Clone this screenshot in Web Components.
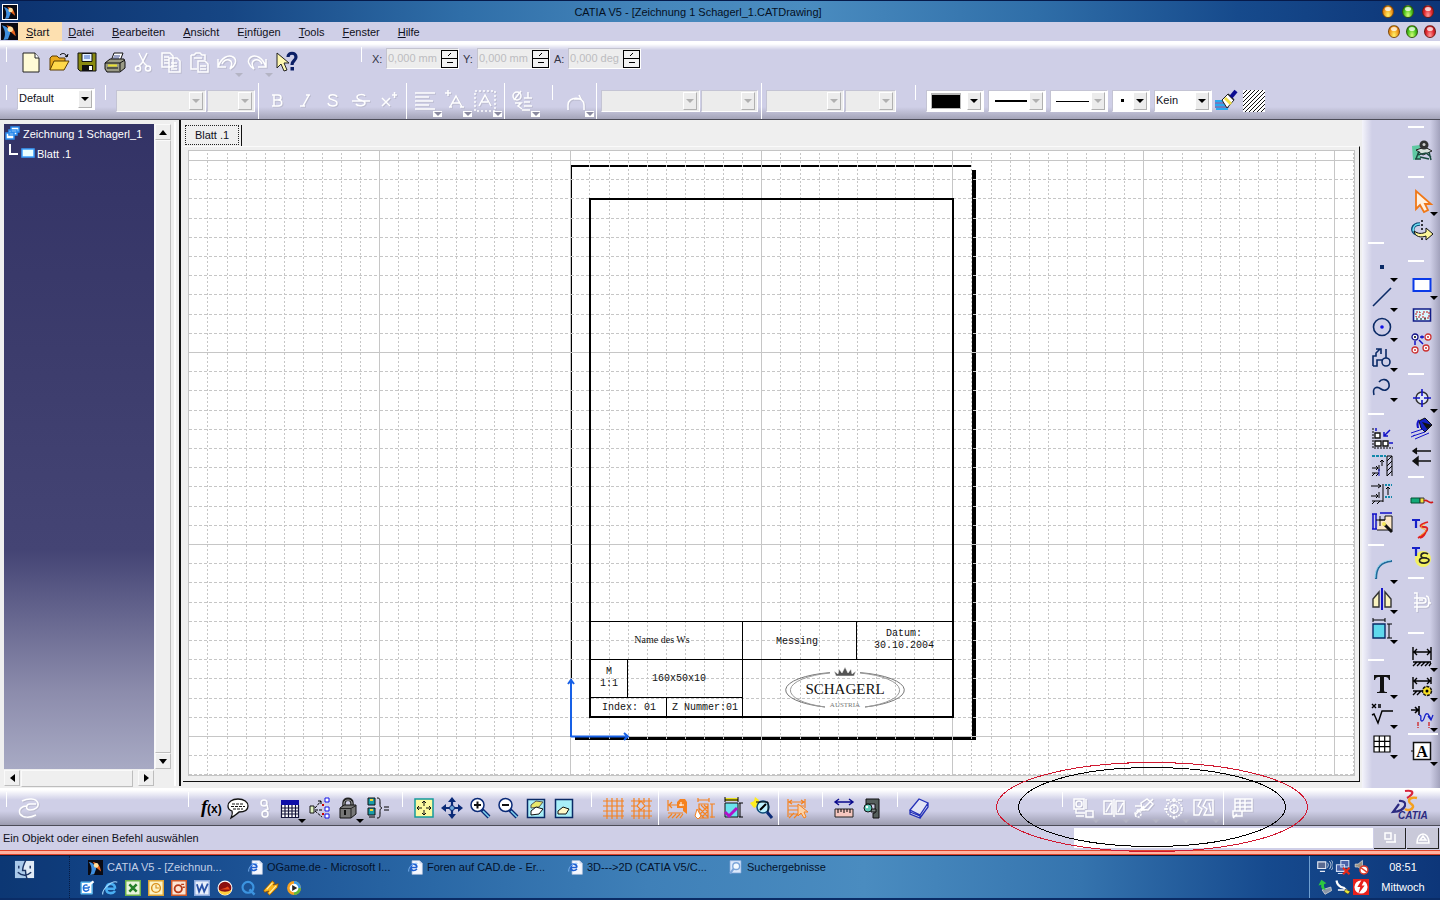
<!DOCTYPE html>
<html lang="de">
<head>
<meta charset="utf-8">
<title>CATIA V5 - [Zeichnung 1 Schagerl_1.CATDrawing]</title>
<style>
  html, body { margin: 0; height: 100%; }
  body { font: 11px/14px "Liberation Sans", Arial, sans-serif; color: #101020; background: #cfcfe7; overflow: hidden; }
</style>
</head>
<body>
<cad-app></cad-app>
<script>
/* ---------- icon drawings, 22 x 22 grid ---------- */
const K = 'stroke="#000" fill="none"';
const N = 'stroke="#0a2a66" fill="none" stroke-width="1.6"';
const B = 'stroke="#1212c8" fill="none"';
const W = 'stroke="#fff" fill="none" stroke-width="1.5"';
const O = 'stroke="#f58220" fill="none" stroke-width="1.2"';
const ICONS = {
  new: `<path d="M3 2h12l4 5v14H3z" fill="#fffbd6" stroke="#222"/><path d="M15 2v5h4" fill="#fff" stroke="#222"/>`,
  open: `<path d="M2 19V7l2-2h5l2 2h6v3" fill="#e9a91c" stroke="#5c3c00"/><path d="M2 19l4-9h15l-5 9z" fill="#ffd84a" stroke="#5c3c00"/><path d="M12 4c3-3 6-1 7 2m0 0l-2-1m2 1l1-3" ${K}/>`,
  save: `<path d="M2 2h18v18H4l-2-2z" fill="#8a8a10" stroke="#111"/><path d="M6 2.500h10v8H6z" fill="#e6f3ff" stroke="#111"/><path d="M8 5h6M8 7h6" stroke="#3a62c0"/><path d="M6 14h11v6H6z" fill="#111"/><path d="M13 15h3v4h-3z" fill="#fff"/>`,
  print: `<path d="M7 10l3-8h9l-3 8z" fill="#fff" stroke="#111"/><path d="M10 5h6M9 7h6" stroke="#3a4a90"/><path d="M1 12l5-4h14l1 3v6l-5 4H3l-2-3z" fill="#9a9a86" stroke="#111"/><path d="M1 12h15l5-3M16 12v8M3 17h11" stroke="#111" fill="none"/><path d="M4 14.500h9" stroke="#e8e030" stroke-width="2"/>`,
  cut: `<path d="M7 2l5 10M15 2l-5 10M10 12l-3 3M12 12l3 3" ${W}/><circle cx="6" cy="17.500" r="2.500" ${W}/><circle cx="16" cy="17.500" r="2.500" ${W}/>`,
  copy: `<path d="M2 2h8l3 3v11H2zM4 6h5M4 9h5M4 12h5M9 7h8l3 3v11H9zM11 12h6M11 15h6M11 18h6" ${W}/>`,
  paste: `<path d="M3 4h3l2-2h4l2 2h3v5M3 4v14h6M6 7h8M10 10h7l3 3v8H10zM12 15h6M12 18h6" ${W}/>`,
  undo: `<path d="M2 8v8h8M2 16c3-9 10-13 15-10s2 9-3 12c3-5 2-8-1-9s-6 1-7 4" ${W}/>`,
  redo: `<path d="M20 8v8h-8M20 16c-3-9-10-13-15-10s-2 9 3 12c-3-5-2-8 1-9s6 1 7 4" ${W}/>`,
  help: `<path d="M1 2v15l4-4 3 7 3-1-3-7h5z" fill="#fff8b0" stroke="#222"/><path d="M12 6c0-5 8-5 8 0 0 4-4 3-4 8" fill="none" stroke="#0b1f66" stroke-width="3.200"/><path d="M14.500 16h3.500v3.500h-3.500z" fill="#0b1f66"/>`,
  bold: `<path d="M6 5h6c4 0 4 5 0 5H8h4c5 0 5 6 0 6H6M8 5v11" ${W}/>`,
  italic: `<path d="M15 5l-6 11M12 5h4M6 16h5" ${W}/>`,
  under: `<path d="M15 7c-1-3-8-3-8 0 0 4 8 2 8 6 0 4-8 4-9 0" ${W}/>`,
  strike: `<path d="M15 6c-1-2-8-2-8 1 0 4 8 3 8 6s-7 4-9 1M2 11h18" ${W}/>`,
  super: `<path d="M4 8l8 8M12 8l-8 8M14 5h5M16.500 2v6" ${W}/>`,
  align: `<path d="M1 3h20M1 7h14M1 11h18M1 15h14M1 19h20" ${W}/>`,
  anchor: `<path d="M1 3h6M4 0v6M6 17L12 6l6 11M8 13h8M5 17h3M16 17h4" ${W}/>`,
  frame: `<path d="M1 1h20v20H1z" ${W} stroke-dasharray="2 2"/><path d="M5 16l6-11 6 11M8 12h6" ${W}/>`,
  symbol: `<circle cx="5" cy="6" r="4" ${W}/><path d="M2 10L9 1M12 8h8M16 2v6M3 13h6l-3 3 4 3M12 12h6M12 16h8M10 20h8" ${W}/>`,
  curve: `<path d="M2 20v-5c0-9 16-9 16 0v5M8 9h7l-2-4" ${W}/>`,
  brush: `<path d="M0 11h12M0 15h12M1 19h12" stroke="#29a8ef" stroke-width="2"/><path d="M0 13h12M0 17h14" stroke="#0a2a99"/><path d="M7 10l6-6 6 6-7 8z" fill="#fff" stroke="#222"/><path d="M10 8l6 6" stroke="#f2e04a" stroke-width="3"/><path d="M13 4l6 6" stroke="#222" stroke-width="1.500"/><path d="M16 7l5-6" stroke="#0b0b90" stroke-width="4"/>`,
  hatch: `<path d="M0 0h22v22H0z" fill="#fff"/><path d="M0 4L4 0M0 8L8 0M0 12L12 0M0 16L16 0M0 20L20 0M2 22L22 2M6 22L22 6M10 22L22 10M14 22l8-8M18 22l4-4" stroke="#111"/>`,
  refresh: `<path d="M5 4c6-3 14-3 16 2 1 4-3 7-8 7s-4-6 0-6h6M19 18c-6 3-13 3-16-1-2-5 2-8 7-8" ${W}/>`,
  fx: `<text x="2" y="16" font-family="Liberation Serif" font-style="italic" font-weight="700" font-size="19">f</text><text x="8" y="16" font-family="Liberation Sans" font-size="12" font-weight="700">(x)</text>`,
  bubble: `<path d="M11 2c6 0 10 3 10 7s-4 6-9 6c-2 2-5 4-8 6 1-3 2-4 1-7-3-1-4-3-4-5 0-4 4-7 10-7z" fill="#fff" stroke="#111" stroke-width="1.300"/><path d="M5 7h12M4 9.500h14M6 12h10" stroke="#111" stroke-dasharray="3 1"/>`,
  chain: `<circle cx="11" cy="6" r="3" ${W}/><circle cx="12" cy="17" r="3" ${W}/><path d="M14 8l1 4-4 2" ${W}/>`,
  table: `<path d="M2 3h18v18H2z" fill="#fff"/><path d="M2 3h18v5H2z" fill="#1010a8"/><path d="M2.500 8v12.500h17V8M6 8v12M9.500 8v12M13 8v12M16.500 8v12M2 11h18M2 14h18M2 17h18" stroke="#15153a" fill="none" stroke-width="1.200"/>`,
  nodes: `<path d="M1 9h4v7H1z" fill="#dff3c0" stroke="#111"/><path d="M6 11L12 4M12 4h-3M12 4v3M6 13h8M6 14l7 6" ${K} stroke-dasharray="3 1"/><path d="M16 1h4v4h-4zM16 10h4v4h-4zM16 17h4v4h-4z" fill="#fff" stroke="#1212e8"/><path d="M13 7l2 2m0-2l-2 2m0 7l2 2m0-2l-2 2" stroke="#c00"/>`,
  lock: `<path d="M7 10V6c0-5 8-5 8 0v4" fill="none" stroke="#222" stroke-width="3.500"/><path d="M7 10V6c0-4 8-4 8 0v4" fill="none" stroke="#aaa"/><path d="M3 11l4-3h12v9l-5 4H3z" fill="#777" stroke="#111"/><path d="M14 12v9M3 11.500h11l5-3" stroke="#222" fill="none"/><path d="M8 13v5" stroke="#111" stroke-width="2"/>`,
  brace: `<path d="M1 1h7v7H1zM1 11h7v7H1z" fill="#1b9ba8" stroke="#111"/><path d="M3 2h3v2H3zM3 12h3v2H3z" fill="#f2d835"/><path d="M10 1c3 0 3 1 3 5s0 4 2 5c-2 1-2 1-2 5s0 5-3 5M17 10h5M17 13h5M2 20h6" ${K} />`,
  fit: `<path d="M2 2h18v18H2z" fill="#fdfba0" stroke="#159a9a" stroke-width="1.500"/><path d="M11 4v5M11 13v5M4 11h5M13 11h5M9 6l2-2 2 2M9 16l2 2 2-2M6 9l-2 2 2 2M16 9l2 2-2 2" stroke="#111" fill="none"/>`,
  pan: `<path d="M11 3v16M3 11h16" stroke="#0a2a77" stroke-width="2.200"/><path d="M11 0l4 5H7zM11 22l4-5H7zM0 11l5-4v8zM22 11l-5-4v8z" fill="#0a2a77"/><circle cx="11" cy="11" r="2.500" fill="#6fa8d8" stroke="#0a2a77"/>`,
  zoomin: `<path d="M13 13l7 7" stroke="#0a2a77" stroke-width="4"/><path d="M14 14l6 6" stroke="#7fd4ef" stroke-width="1.500"/><circle cx="8.500" cy="8" r="6.500" fill="#fff" stroke="#0a2a77" stroke-width="1.500"/><path d="M5 8h7M8.500 4.500v7" stroke="#111" stroke-width="2"/>`,
  zoomout: `<path d="M13 13l7 7" stroke="#0a2a77" stroke-width="4"/><path d="M14 14l6 6" stroke="#7fd4ef" stroke-width="1.500"/><circle cx="8.500" cy="8" r="6.500" fill="#fff" stroke="#0a2a77" stroke-width="1.500"/><path d="M5 8h7" stroke="#111" stroke-width="2"/>`,
  viewa: `<path d="M2.500 2.500h17v18h-17z" fill="#a8eef8" stroke="#0a2a66" stroke-width="1.500"/><path d="M6 8l5-4 7 1-4 5-8 1z" fill="#e9e86a" stroke="#555"/><path d="M6 14l5-4 7 2-4 5-8 1z" fill="#fff" stroke="#111"/>`,
  viewb: `<path d="M2.500 2.500h17v18h-17z" fill="#a8eef8" stroke="#0a2a66" stroke-width="1.500"/><path d="M5 14l5-4 6 2-3 5-8 0z" fill="#fff9c8" stroke="#111"/>`,
  grid: `<path d="M5 1v21M10 1v21M15 1v21M20 1v21M1 4h21M1 9h21M1 14h21M1 19h21" ${O}/>`,
  snap: `<path d="M4 1v21M9 1v5M9 12v10M14 12v10M14 1v5M19 1v21M1 4h21M1 9h6M15 9h6M1 14h21M1 19h21M11 4l4 5-4 4-4-4z" ${O}/>`,
  dimA: `<path d="M2 3v11M3 8h8M6 5L3 8l3 3M2 16h15M2 21l4-4M6 21l4-4M10 21l4-4M14 21l3-4" ${O}/><path d="M11 11V5l3-3h5l2 3v12l-4-3v-3z" fill="#f58220"/><path d="M13 8h5M15 5v4" stroke="#fff"/>`,
  dimB: `<path d="M4 3h11M4 1v4M15 1v4M5 7h9v14H5zM18 7v14M16 7h5M16 20h5M5 11l9 9M5 16l5 5M7 8l7 7M10 8l4 4M14 9l-8 8M14 14l-6 6" ${O}/><path d="M3 12l4 7-3 3-3-3z" fill="#fff" stroke="#f58220"/>`,
  check: `<path d="M3 6h13v14H3z" fill="#6be3ee" stroke="#111"/><path d="M3 2.500h13" stroke="#e8e020" stroke-width="3"/><path d="M3 0v5M16 0v5M18 6v14M17 6h4M17 20h4M3 3h13" ${K}/><path d="M3 15l4 4 8-8" stroke="#b013c8" fill="none" stroke-width="3"/>`,
  spark: `<path d="M0 6l4-2 1-4 4 3-1 6-4 2z" fill="#ffee20"/><circle cx="13" cy="10" r="6" fill="#bdf2ff" stroke="#0a4a77" stroke-width="1.500"/><path d="M6 5h12v12" ${K}/><path d="M17 15l5 6" stroke="#0a2a77" stroke-width="3"/><path d="M10 13l6-6" ${K} stroke-width="2"/>`,
  dimC: `<path d="M2 2v18M19 2v9M3 5h15M3 9h15M6 3L3 5l3 2M15 3l3 2-3 2M2 13h12M3 17h12M3 21l5-5M8 21l5-5" ${O} stroke-width="1.600"/><path d="M12 7v12l3-3 3 5 2-1-2-5h4z" fill="#fbd3aa" stroke="#f58220"/>`,
  measure: `<path d="M2 5h18M6 2L2 5l4 3M16 2l4 3-4 3" stroke="#0a0a8c" fill="none" stroke-width="1.400"/><path d="M2 12h18v8H2z" fill="#f6c7c0" stroke="#222"/><path d="M5 12v4M8 12v3M11 12v4M14 12v3M17 12v4" ${K}/>`,
  caliper: `<path d="M5 2h13v19h-6v-5h2V7H5z" fill="#555f5c" stroke="#111"/><path d="M10 12h5v3h-5z" fill="#7b8583" stroke="#111"/><circle cx="7" cy="11" r="4" fill="#5fc9b8" stroke="#111"/><circle cx="6" cy="10" r="1.200" fill="#fff"/>`,
  slab: `<path d="M2 13L11 2l9 4-8 12zM2 13v4l10 4v-4M12 21l8-11V6M2 15l10 4" fill="#eef2ff" stroke="#2330b8" stroke-width="1.300" fill-opacity=".6"/>`,
  v1: `<path d="M1 2h10v10H1zM13 14h7v6h-7zM3 12v4h9M13 2v10M3 19h8" ${W}/><circle cx="6" cy="7" r="3" ${W}/>`,
  v2: `<path d="M1 4h8v13H1zM13 4h8v13h-8zM11 2v18M3 15l5-9M15 15l5-9" ${W}/>`,
  v3: `<path d="M8 6l6-4 6 5-5 6-6-1zM2 9h6M4 13h8M2 18l9-9M20 2L8 14" ${W}/><circle cx="5" cy="17" r="3" ${W} stroke-dasharray="2 1"/>`,
  v4: `<circle cx="11" cy="12" r="8" ${W} stroke-dasharray="2 1"/><circle cx="11" cy="12" r="4" ${W}/><path d="M11 1v21M1 12h8M3 3h16" ${W} stroke-dasharray="4 2"/>`,
  v5: `<path d="M1 3h7l-3 6 4 3-3 6H1zM13 3l-3 6 4 3-3 6h9V3zM16 6l2 9" ${W}/>`,
  v6: `<path d="M4 2h17v12H4zM4 6h17M4 10h17M9 2v12M14 2v12M2 14h9v5H2zM2 21l4-4" ${W}/>`,
  wb: `<path d="M1 6l8-1v14l-7 1z" fill="#5fc9a2"/><path d="M5 10l9-3 7 4-9 4z" fill="#d8e2dc" stroke="#222"/><path d="M6 15l9-2 5 4M8 11l-3 8M18 12l2 8M4 19h6M9 17l9 2" stroke="#1b4b3e" fill="none" stroke-width="1.500"/><circle cx="13" cy="5" r="4.500" fill="#333"/><circle cx="13" cy="4.500" r="1.500" fill="#ccc"/>`,
  arrow: `<path d="M5 1v18l4-4 4 7 4-2-3-6h6z" fill="#fff1e0" stroke="#f07818" stroke-width="1.800"/>`,
  rotate: `<path d="M9 4C1 4-1 12 6 14" fill="none" stroke="#0a4a77" stroke-width="3.500"/><path d="M9 4C2 4 0 11 5 13" fill="none" stroke="#6fe0f2" stroke-width="1.500"/><path d="M3 11c4 3 8 3 12 1V8l7 6-7 6v-4c-5 2-11 1-12-5z" fill="#fbf59a" stroke="#111"/><path d="M11 0v10M11 18v4" ${K} stroke-dasharray="2 2" stroke-width="1.500"/>`,
  sheet: `<path d="M2.500 5h17v12h-17z" fill="#fff" stroke="#0a3ae8" stroke-width="2"/>`,
  view: `<path d="M2.500 5h17v12h-17z" fill="#d8f8ff" stroke="#111c88" stroke-width="1.600"/><path d="M5 8h4v5H5zM12 8h6v6h-6z" fill="none" stroke="#c01818" stroke-dasharray="2 1"/><path d="M5 15h12" stroke="#111" stroke-dasharray="2 2"/>`,
  circles: `<g fill="#fff" stroke-width="1.300"><circle cx="4" cy="5" r="3" stroke="#111188"/><circle cx="17" cy="5" r="3" stroke="#c33"/><circle cx="4" cy="18" r="3" stroke="#c33"/><circle cx="15" cy="16" r="3" stroke="#c33"/></g><circle cx="4" cy="5" r="1"/><g fill="#c33"><circle cx="17" cy="5" r="1"/><circle cx="4" cy="18" r="1"/><circle cx="15" cy="16" r="1"/></g><path d="M9 5h4m-2-1.500V6.500M4 9v4M8 8l4 4" ${B} stroke-width="1.500"/>`,
  target: `<circle cx="11" cy="11" r="6" fill="#dfe6f6" stroke="#333" stroke-width="1.500"/><path d="M11 2v7M11 13v7M2 11h7M13 11h7" ${B} stroke-width="1.600"/>`,
  bucket: `<path d="M8 4l6-3 7 7-7 7-4-4z" fill="#1420c0" stroke="#111"/><path d="M11 5l5 7 5-4" fill="#111"/><path d="M8 3c-3 4-1 6-1 8" ${B} stroke-width="2"/><path d="M0 16l12-4M2 19l12-4M4 22l14-6M0 20l4-2" ${B}/>`,
  arrows: `<path d="M20 6H3M6 3L2 6l4 3M20 16H3M7 12l-5 4 5 4z" stroke="#111" fill="#111" stroke-width="1.400"/>`,
  weld: `<path d="M0 8h9v5H0z" fill="#12a878" stroke="#053"/><path d="M9 8h4v5H9z" fill="#f2e23c" stroke="#333"/><path d="M13 11c3-3 5 4 9 1" stroke="#d01818" fill="none" stroke-width="1.600"/>`,
  tz: `<path d="M1 2h8M5 2v8" stroke="#1520c8" stroke-width="2.200"/><path d="M17 4c-8 2-10 5-4 5s4 5-6 11M15 12c0 4-3 7-6 8" stroke="#e02020" fill="none" stroke-width="1.800"/><path d="M14 6c-6 3-5 4-1 5s0 4-4 7" stroke="#ffb028" fill="none"/>`,
  ts: `<circle cx="12" cy="13" r="8" fill="#f2f060"/><path d="M1 2h8M5 2v8" stroke="#1520c8" stroke-width="2.200"/><path d="M17 8c-3-2-7-1-7 2s8 1 8 4-6 4-9 2c-2-3 2-5 7-4" stroke="#222" fill="none" stroke-width="1.600"/>`,
  balloon: `<path d="M3 2h3v19M3 7h9c4 0 4 5 0 5H3M3 16h12c4 0 4-11 0-11M17 12h3M8 9h4" ${W}/>`,
  dim: `<path d="M2 1v13M20 1v13M3 6h16M6 3L3 6l3 3M16 3l3 3-3 3M2 16h18M2 20l4-4M6 20l4-4M10 20l4-4M14 20l4-4M18 20l2-3" ${K} stroke-width="1.400"/>`,
  dimgear: `<path d="M2 1v12M20 1v7M3 5h16M6 2L3 5l3 3M16 2l3 3-3 3M2 15h10M2 19l4-4M6 19l4-4" ${K} stroke-width="1.400"/><circle cx="16" cy="15" r="4.500" fill="#f7df25" stroke="#111" stroke-width="1.500" stroke-dasharray="3 1"/><circle cx="16" cy="15" r="1.500"/>`,
  break: `<path d="M0 4h7M4 1l3 3-3 3M8 0v9" ${K} stroke-width="1.600"/><path d="M8 9c4 0 0 6 3 6s2-9 6-7l3 5M17 10l3 4 2-5" stroke="#1520c8" fill="none" stroke-width="1.300"/><path d="M7 16v6M18 16v6" stroke="#d02020" stroke-width="1.300" stroke-dasharray="4 1"/>`,
  datum: `<path d="M2.500 2.500h17v17h-17z" fill="#fff" stroke="#111" stroke-width="1.500"/><text x="11" y="17" text-anchor="middle" font-family="Liberation Serif" font-weight="700" font-size="16">A</text><path d="M0 11h2" ${K}/>`,
  point: `<path d="M9 9h4v4H9z" fill="#0a2a66"/>`,
  line: `<path d="M2 20L20 2" ${N}/>`,
  circle: `<circle cx="11" cy="11" r="8.500" ${N}/><circle cx="11" cy="11" r="1.800" fill="#1212e8"/>`,
  profile: `<path d="M2 20V10h3V7l4-4M5 3h5v5M2 20h4v-6h6M15 3v9" ${N}/><circle cx="15" cy="16" r="4" ${N}/>`,
  spline: `<path d="M3 19c-2-8 3-9 7-6s9 0 8-5-7-6-10-2" ${N}/>`,
  cons1: `<path d="M2 1v20h20" ${K} stroke-dasharray="2 1"/><path d="M4 6h5v5H4zM4 14h6v5H4zM12 14h5v5h-5z" fill="#fff" stroke="#111" stroke-width="1.400"/><path d="M19 3l-6 6m0-4v4h4M22 16h-4M5 1v3" ${B} stroke-width="1.500"/>`,
  cons2: `<path d="M1 1h14" stroke="#18a" stroke-width="2" stroke-dasharray="3 1"/><path d="M16 1h5v20M16 1v20M16 6l5-5M16 11l5-5M16 16l5-5M16 21l5-5M1 13h6M5 11l2 2-2 2M8 10v6M1 18h7M1 21l3-3M5 21l3-3M11 5v6M9 7l2-2 2 2" ${K}/><path d="M8 14v7" ${B}/>`,
  cons3: `<path d="M0 3h10M7 1l3 2-3 2M0 13h7M5 11l2 2-2 2M12 1v18M8 9v6M1 18h11M1 21l3-3M6 21l3-3M17 4v8M15 6l2-2 2 2" ${K}/><path d="M14 2h7M14 14h7" stroke="#18a" stroke-dasharray="2 1" stroke-width="2"/>`,
  cons4: `<path d="M8 9h6V5h7v14H6" fill="#fde8c8" stroke="#111"/><path d="M2 3v15M5 3v15M1 3h5M1 18h5M9 2h12" ${B} stroke-width="1.500"/><path d="M5 9h9M9 5v10" stroke="#111"/><path d="M13 13l8 8" stroke="#111" stroke-width="3"/><circle cx="13" cy="13" r="2" fill="#f5e85a"/>`,
  fillet: `<path d="M5 21C5 9 10 4 21 3" fill="none" stroke="#1f6a9a" stroke-width="2.200"/><path d="M4 20C4 9 10 3 20 2" fill="none" stroke="#9ad8f0"/>`,
  mirror: `<path d="M2 19V11l6-7v15zM20 19V11l-6-7v15z" fill="#faf3c0" stroke="#333" stroke-width="1.400"/><path d="M11 0v22" ${B} stroke-width="2"/>`,
  box: `<path d="M2 6h12v14H2z" fill="#5fd8ec" stroke="#0a2a66" stroke-width="1.400"/><path d="M2 2h12M2 0v4M14 0v4M18 6v14M16 6h5M16 20h5" ${K}/>`,
  text: `<path d="M3 2h16v5h-1c-1-3-2-3-5-3v13c0 2 1 2 3 2v1H6v-1c2 0 3 0 3-2V4C6 4 5 4 4 7H3z" fill="#111"/>`,
  rough: `<path d="M1 1l4 4m0-4L1 5M7 2h3M7 4h3M1 12l2-1 4 9 4-12h11" ${K} stroke-width="1.400"/>`,
  gridt: `<path d="M3 3h16v16H3z" fill="#fff"/><path d="M3 3h16v16H3zM8.300 3v16M13.700 3v16M3 8.300h16M3 13.700h16" ${K} stroke-width="1.200"/>`,
  catia: `<path d="M0 0h22v22H0z" fill="#0a0a12"/><path d="M1 3c6 1 10 5 11 10l-3 8-6 1c4-7 2-14-2-19z" fill="#3f8fe0"/><path d="M7 3c7 1 11 5 12 14l-7-6z" fill="#e8641c"/><circle cx="12" cy="8" r="3.500" fill="#ffe0a0"/>`,
  page: `<path d="M6 1h11l4 4v16H6z" fill="#f6f8ff" stroke="#bcc8e0"/><path d="M17 1v4h4" fill="#cdd8ee"/><path d="M13 11H4c0 6 7 5 9 2M4 10c1-6 9-5 9 1" fill="none" stroke="#1e5ed0" stroke-width="2.500"/><path d="M1 17C0 10 9 3 14 5" fill="none" stroke="#7db4f4" stroke-width="1.300"/>`,
  search: `<path d="M3 1h16v18H3z" fill="#dbe8fb" stroke="#8fb0de"/><circle cx="12" cy="9" r="5" fill="#f4faff" stroke="#7da6da" stroke-width="2"/><path d="M8 13l-5 7" stroke="#7da6da" stroke-width="3"/>`,
  mail: `<path d="M3 3h15v16H3z" fill="#fff" stroke="#5fb8ec" stroke-width="2" stroke-linejoin="round"/><path d="M14 11H6c0 6 6 5 8 2M6 10c1-5 8-4 8 1" fill="none" stroke="#1e6ed8" stroke-width="2"/><path d="M12 8l8-6" stroke="#fff" stroke-width="3"/>`,
  ie: `<path d="M18 12H6c0 8 9 7 12 3M6 11c1-8 12-7 12 1" fill="none" stroke="#4aaef2" stroke-width="3.500"/><path d="M1 20C0 12 14 0 21 3" fill="none" stroke="#a8dcff" stroke-width="1.500"/>`,
  excel: `<path d="M1 1h20v20H1z" fill="#e8f4dc" stroke="#6db04a" stroke-width="2"/><path d="M6 6l10 10M16 6L6 16" stroke="#25802a" stroke-width="3.500"/>`,
  clock: `<path d="M1 1h20v20H1z" fill="#fdf2c4" stroke="#dba336" stroke-width="2"/><circle cx="11" cy="11" r="6" fill="none" stroke="#d98f1c" stroke-width="2"/><path d="M11 7v4h4" stroke="#d98f1c" fill="none" stroke-width="1.500"/>`,
  ppt: `<path d="M1 1h20v20H1z" fill="#fce4d4" stroke="#d05a2a" stroke-width="2"/><circle cx="10" cy="12" r="5" fill="none" stroke="#b83a18" stroke-width="2.500"/><path d="M14 6h4M16 10h3" stroke="#b83a18" stroke-width="2"/>`,
  word: `<path d="M1 1h20v20H1z" fill="#e8effc" stroke="#8ba8dc" stroke-width="2"/><path d="M4 6l3 10 4-9 3 9 5-11" fill="none" stroke="#2a52a8" stroke-width="2.500"/>`,
  ff: `<circle cx="11" cy="11" r="9.500" fill="#8c1010" stroke="#fff" stroke-width="1.500"/><path d="M2 13c5 4 13 4 18 0-2 10-16 10-18 0z" fill="#ffd040"/><path d="M4 13h14l-3-4-4 2z" fill="#e84818"/>`,
  qt: `<circle cx="11" cy="10" r="7.500" fill="none" stroke="#3c94e0" stroke-width="3"/><path d="M13 13l7 7" stroke="#3c94e0" stroke-width="3.500"/>`,
  bolt: `<path d="M1 14L13 1l3 3-2 3 7-2-1 5L9 21l-3-3 2-3-6 2z" fill="#fbb51c" stroke="#8a4a00"/><path d="M5 13L13 4M9 18L18 8" stroke="#fff2b0" stroke-width="1.500"/>`,
  wmp: `<circle cx="11" cy="11" r="9.500" fill="#f5a020"/><path d="M11 1.500A9.500 9.500 0 0 1 20.500 11H11z" fill="#3b9be8"/><path d="M20.500 11A9.500 9.500 0 0 1 11 20.500V11z" fill="#62b838"/><circle cx="11" cy="11" r="6" fill="#fff"/><path d="M8.500 7l7 4-7 4z" fill="#222"/>`,
  finder: `<path d="M1 2h20v18H1z" fill="#a9c9ea"/><path d="M12 2h9v18h-8c-1-3-1-5-1-7H9c0-5 2-9 3-11z" fill="#e1ebf6"/><path d="M13 0c-3 6-4 9-4 12h3c0 4 1 7 2 10M5 7v3M17 7v3M4 14c4 4 10 4 14 0" fill="none" stroke="#1c3464" stroke-width="1.500"/>`,
  t1: `<path d="M1 4h11v9H1zM4 17h7" fill="#5a6a90" stroke="#e6eaf4" stroke-width="1.500"/><path d="M14 5c2 2 2 4 0 7M17 3c3 3 3 7 0 11M20 2c3 4 3 9 0 13" fill="none" stroke="#fff"/>`,
  t2: `<path d="M8 2h11v9H8zM2 8h11v9H2zM4 20h7" fill="#4a62a8" stroke="#cfdcf2" stroke-width="1.500"/><path d="M11 12l9 9M20 12l-9 9" stroke="#e82818" stroke-width="3"/>`,
  t3: `<path d="M3 7h4l6-5v14l-6-5H3z" fill="#9a9080" stroke="#ddd"/><circle cx="15" cy="15" r="5.500" fill="#fff" stroke="#e03a28" stroke-width="2"/><path d="M11 12l8 6" stroke="#e03a28" stroke-width="2"/>`,
  t4: `<path d="M7 15l12-4 1 5-9 5z" fill="#8a96a8" stroke="#ddd"/><path d="M12 15c-6 0-7-4-6-7l-4 1 4-8 7 5-3 1c-1 3 0 5 2 8z" fill="#2cc840"/>`,
  t5: `<path d="M2 2c1 6 4 9 10 10l5 5" fill="none" stroke="#fff" stroke-width="3"/><path d="M4 15h8l6 4" stroke="#fff" stroke-width="2" fill="none"/><path d="M14 14l7 3-3 4-5-3z" fill="#e8e838" stroke="#333"/>`,
  t6: `<path d="M0 0h22v22H0z" fill="#e8201c"/><circle cx="11" cy="11" r="9" fill="#fff"/><path d="M12 1L6 11h4l-3 10 9-12h-4l4-8z" fill="#e8201c"/>`
};
const svg = (name, size = 22) => `<svg width="${size}" height="${size}" viewBox="0 0 22 22" aria-hidden="true">${ICONS[name] || ''}</svg>`;

/* Registers an element whose shadow root is cloned from a template. */
function define(tag, css, html) {
  const t = document.createElement('template');
  t.innerHTML = `<style>*,*::before,*::after{box-sizing:border-box}button{font:inherit;color:inherit;border:0;background:none;padding:0;margin:0}${css}</style>`;
  const fixed = typeof html === 'string';
  if (fixed) t.innerHTML += html;
  customElements.define(tag, class extends HTMLElement {
    constructor() { super(); this.attachShadow({ mode: 'open' }); }
    connectedCallback() {
      if (this.shadowRoot.childNodes.length) return;
      this.shadowRoot.append(t.content.cloneNode(true));
      if (!fixed) this.shadowRoot.append(document.createRange().createContextualFragment(html(this)));
    }
  });
}

/* ---------- small parts ---------- */
define('svg-icon', `:host{display:block;line-height:0;flex:none}svg{display:block}`,
  el => svg(el.getAttribute('name'), el.getAttribute('size') || 16));

define('tool-button', `
  :host{display:block;flex:none;width:28px;height:28px;position:relative}
  :host([drop]){width:30px}
  :host([narrow]){width:24px}
  button{display:flex;align-items:center;justify-content:center;width:28px;height:28px}
  :host([narrow]) button{width:24px}
  svg{display:block;overflow:visible}
  :host([off]) svg{filter:drop-shadow(1px 1px 0 #bcbcd0)}
  i{position:absolute;left:22px;top:25px;border:4px solid transparent;border-top-color:#000;border-bottom:0}
  :host([off]) i{border-top-color:#b4b4c4}
  :host([boxed]) i{border:0;left:22px;top:24px;width:9px;height:6px;background:linear-gradient(#fff,#fff)}
  :host([boxed]) i::after{content:"";position:absolute;left:1px;top:1px;border:4px solid transparent;border-top-color:#8a8aa0;border-bottom:0}`,
  el => `<button type="button" aria-label="${el.getAttribute('label') || el.getAttribute('name')}"${el.hasAttribute('off') ? ' disabled' : ''}>${svg(el.getAttribute('name'))}</button>${el.hasAttribute('drop') ? '<i></i>' : ''}`);

define('tool-sep', `:host{display:block;flex:none;width:8px;align-self:stretch;background:linear-gradient(#fff,#fff) 3px 0/1px 100% no-repeat}`, '');

define('tool-group', `
  :host{display:flex;align-items:center;min-width:0;padding-left:6px}
  span{flex:none;align-self:flex-start;width:1px;height:15px;margin:2px var(--lead,10px) 0 0;background:#fff}`,
  `<span></span><slot></slot>`);

define('combo-box', `
  :host{display:grid;flex:none;height:22px;background:#fff;border:1px solid #c4c4d4;border-right-color:#fff;border-bottom-color:#fff}
  :host([off]){background:#ececec}
  select{grid-area:1/1;min-width:0;width:100%;height:20px;appearance:none;border:0;background:none;padding:0 0 2px 1px;font:inherit;color:#101020;opacity:1}
  .face{grid-area:1/1;display:flex;align-items:center;padding-left:4px;pointer-events:none}
  .btn{grid-area:1/1;justify-self:end;align-self:center;width:14px;height:18px;margin-right:2px;background:#ececec;border:1px solid #fff;border-right-color:#b0b0b0;border-bottom-color:#b0b0b0;display:flex;align-items:center;justify-content:center;pointer-events:none}
  .btn::after{content:"";border:4px solid transparent;border-top-color:#000;border-bottom:0}
  :host([off]) .btn::after,:host([dim]) .btn::after{border-top-color:#b0b0b0}`,
  el => `<select aria-label="${el.getAttribute('label')}"${el.hasAttribute('off') ? ' disabled' : ''}><option>${el.getAttribute('value') || ''}</option></select><span class="face"><slot></slot></span><span class="btn"></span>`);

define('spin-field', `
  :host{display:flex;align-items:flex-start;width:91px;flex:none}
  label{width:14px;padding-top:4px;color:#333344;white-space:nowrap}
  .box{display:flex;align-items:center;height:21px;width:73px;background:#ededed;border:1px solid #c4c4d0;border-right-color:#fff;border-bottom-color:#fff}
  input{flex:1;min-width:0;border:0;background:none;padding:0 0 2px 1px;font:inherit;color:#bcbcc0;outline:0}
  .b{display:flex;flex-direction:column;width:17px;height:18px;border:1px solid #000;background:#f2f2f2}
  button{flex:1;display:flex;align-items:center;justify-content:center}
  button+button{border-top:1px solid #000}`,
  el => `<label for="v">${el.getAttribute('label')}</label><span class="box"><input id="v" value="${el.getAttribute('value')}" disabled><span class="b"><button type="button" aria-label="Mehr"><svg width="7" height="5"><path d="M2 4l3-3" stroke="#000"/></svg></button><button type="button" aria-label="Weniger"><svg width="7" height="5"><path d="M1 2.500h6" stroke="#000"/></svg></button></span></span>`);

define('orb-buttons', `
  :host{display:flex;gap:var(--orb-gap,8px);align-items:center}
  button{width:12px;height:13px;border-radius:50%;border:1px solid rgba(40,20,0,.55)}
  .y{background:radial-gradient(ellipse at 50% 85%,#fff36a,#f0a020 55%,#c85a08)}
  .g{background:radial-gradient(ellipse at 50% 85%,#d4ff7a,#4fc41e 55%,#1c7a10)}
  .r{background:radial-gradient(ellipse at 50% 85%,#ff9a9a,#e02830 55%,#9a1018)}
  button::after{content:"";display:block;width:6px;height:4px;margin:0 auto 5px;border-radius:50%;background:rgba(255,255,255,.75)}`,
  `<button class="y" type="button" aria-label="Minimieren"></button><button class="g" type="button" aria-label="Wiederherstellen"></button><button class="r" type="button" aria-label="Schließen"></button>`);

/* ---------- title and menu ---------- */
define('title-bar', `
  :host{display:grid;grid-template-columns:1fr auto 1fr 40px;align-items:center;height:22px;padding:0 6px 0 2px;border-top:1px solid #061a4a;color:#04101f;
    background:linear-gradient(90deg,#0c326f,#164684 16%,#2f6ea8 32%,#4687bc 46%,#4a8cc0 56%,#2f6ea8 72%,#164a8c 86%,#0d3577)}
  svg-icon{border:1px solid #fff;width:16px;height:16px;overflow:hidden}
  orb-buttons{grid-column:3/5;justify-self:end}`,
  `<svg-icon name="catia" size="14"></svg-icon><span>CATIA V5 - [Zeichnung 1 Schagerl_1.CATDrawing]</span><orb-buttons></orb-buttons>`);

define('menu-bar', `
  :host{display:flex;align-items:center;height:19px;background:#cfcfe7;padding:0 4px 0 1px}
  nav{display:flex;gap:6px;flex:1;align-self:stretch}
  button{padding:0 6px}
  button:first-child{background:#fde0b0;padding:0 13px 0 8px;margin-right:-6px}
  orb-buttons{--orb-gap:6px}`,
  `<svg-icon name="catia" size="17"></svg-icon><nav><button type="button"><u>S</u>tart</button><button type="button"><u>D</u>atei</button><button type="button"><u>B</u>earbeiten</button><button type="button"><u>A</u>nsicht</button><button type="button">E<u>i</u>nfügen</button><button type="button"><u>T</u>ools</button><button type="button"><u>F</u>enster</button><button type="button"><u>H</u>ilfe</button></nav><orb-buttons></orb-buttons>`);

/* ---------- upper toolbars ---------- */
define('top-toolbars', `
  :host{display:block;height:79px;padding-top:4px;border-bottom:1px solid #4c4c58;
    background:linear-gradient(#fff 0,#fff 3px,#cfcfe7 9px,#cfcfe7 66px,#a4a4b8 78px)}
  .row{display:grid;height:34px}
  .one{grid-template-columns:355px 1fr}
  .two{grid-template-columns:99px 447px 363px 1fr;margin-top:4px;height:36px}
  .spins{display:flex;align-self:flex-start;padding-top:3px}
  .set{display:flex;gap:4px}
  .pair{display:flex;gap:1px}
  .w90{width:90px}.w49{width:48px}.w99{width:99px}.w57{width:57px}.w78{width:78px}.w51{width:51px}.w58{width:58px}.w38{width:38px}
  .def{width:78px;margin-bottom:4px}
  svg{display:block}`,
  `<div class="row one">
    <tool-group>
      <tool-button name="new" label="Neu"></tool-button><tool-button name="open" label="Öffnen"></tool-button><tool-button name="save" label="Speichern"></tool-button><tool-button name="print" label="Drucken"></tool-button>
      <tool-button off name="cut" label="Ausschneiden"></tool-button><tool-button off name="copy" label="Kopieren"></tool-button><tool-button off name="paste" label="Einfügen"></tool-button>
      <tool-button off drop name="undo" label="Widerrufen"></tool-button><tool-button off drop name="redo" label="Wiederholen"></tool-button><tool-button name="help" label="Direkthilfe"></tool-button>
    </tool-group>
    <tool-group><div class="spins"><spin-field label="X:" value="0,000 mm"></spin-field><spin-field label="Y:" value="0,000 mm"></spin-field><spin-field label="A:" value="0,000 deg"></spin-field></div></tool-group>
  </div>
  <div class="row two">
    <tool-group><combo-box class="def" label="Stil" value="Default"></combo-box></tool-group>
    <tool-group>
      <div class="pair"><combo-box off class="w90" label="Schriftart"></combo-box><combo-box off class="w49" label="Schriftgröße"></combo-box></div><tool-sep></tool-sep>
      <tool-button off name="bold" label="Fett"></tool-button><tool-button off name="italic" label="Kursiv"></tool-button><tool-button off name="under" label="Unterstrichen"></tool-button><tool-button off name="strike" label="Durchgestrichen"></tool-button><tool-button off name="super" label="Hochgestellt"></tool-button>
      <tool-sep></tool-sep><tool-button off boxed drop name="align" label="Ausrichtung"></tool-button><tool-button off boxed drop name="anchor" label="Ankerpunkt"></tool-button><tool-button off boxed drop name="frame" label="Rahmen"></tool-button>
      <tool-sep></tool-sep><tool-button off boxed drop name="symbol" label="Symbol"></tool-button>
    </tool-group>
    <tool-group>
      <tool-button off boxed drop name="curve" label="Maßlinie"></tool-button><tool-sep></tool-sep>
      <div class="pair"><combo-box off class="w99" label="Toleranz"></combo-box><combo-box off class="w57" label="Wert"></combo-box></div><tool-sep></tool-sep>
      <div class="pair"><combo-box off class="w78" label="Format"></combo-box><combo-box off class="w51" label="Genauigkeit"></combo-box></div>
    </tool-group>
    <tool-group>
      <div class="set">
        <combo-box class="w58" label="Farbe"><svg width="30" height="16"><path d="M0 0h30v16H0z" fill="#b8b8b8"/><path d="M1 2h28v13H1z"/></svg></combo-box>
        <combo-box dim class="w58" label="Linienstärke"><svg width="34" height="4"><path d="M2 2h32" stroke="#000" stroke-width="2"/></svg></combo-box>
        <combo-box dim class="w58" label="Linientyp"><svg width="34" height="3"><path d="M1 1.500h33" stroke="#000"/></svg></combo-box>
        <combo-box class="w38" label="Punktsymbol"><svg width="8" height="4"><path d="M4 0h3v3H4z"/></svg></combo-box>
        <combo-box class="w58" label="Layer" value="Kein"></combo-box>
      </div>
      <tool-button name="brush" label="Format übertragen"></tool-button><tool-button name="hatch" label="Muster"></tool-button>
    </tool-group>
  </div>`);

/* ---------- specification tree ---------- */
define('spec-tree', `
  :host{display:grid;grid-template:1fr 18px / 1fr 17px;background:#efefef;border:4px solid #efefef;border-width:4px 0 1px 4px;width:171px}
  .view{background:linear-gradient(#333366,#3c3c6c 35%,#444474 66%,#585884 72%,#8c8cac 88%,#a8aac4);color:#fff;overflow:hidden}
  ul{list-style:none;margin:0;padding:0}
  li>div{display:flex;align-items:center;height:20px;white-space:nowrap;line-height:18px}
  .root{gap:3px;padding-left:1px}
  .leaf{gap:2px;padding-left:5px}
  svg{display:block;flex:none}
  .v,.h{display:flex;background:#efefef}
  .v{flex-direction:column;border-left:1px solid #f8f8f8}
  .v button,.h button{flex:none;width:16px;height:16px;background:#efefef;border:1px solid #fafafa;border-right-color:#bdbdbd;border-bottom-color:#bdbdbd;display:flex;align-items:center;justify-content:center}
  .thumb{flex:1;border:1px solid #fafafa;border-right-color:#bdbdbd;border-bottom-color:#bdbdbd}
  .h{padding-top:1px;gap:1px}
  .h .thumb{margin-right:4px}`,
  `<div class="view"><ul>
    <li><div class="root"><svg width="15" height="16"><path d="M6 1h8v5H6zM4 4h8v5H4zM1 7h8v6H1z" fill="#fff" stroke="#2a8cf0" stroke-width="1.500"/></svg><span>Zeichnung 1 Schagerl_1</span></div>
      <ul><li><div class="leaf"><svg width="26" height="20"><path d="M1 0v10h8" fill="none" stroke="#fff" stroke-width="2"/><path d="M13 5h12v8H13z" fill="#eaffff" stroke="#3aa0ff" stroke-width="1.500"/></svg><span>Blatt .1</span></div></li></ul></li>
  </ul></div>
  <div class="v"><button type="button" aria-label="Nach oben"><svg width="8" height="5"><path d="M4 0l4 5H0z"/></svg></button><div class="thumb"></div><button type="button" aria-label="Nach unten"><svg width="8" height="5"><path d="M4 5l4-5H0z"/></svg></button></div>
  <div class="h"><button type="button" aria-label="Nach links"><svg width="5" height="8"><path d="M0 4l5-4v8z"/></svg></button><div class="thumb"></div><button type="button" aria-label="Nach rechts"><svg width="5" height="8"><path d="M5 4L0 0v8z"/></svg></button></div>`);

/* ---------- drawing view ---------- */
const minorX = [19, 39, 58, 77, 96, 115, 134, 153, 172];
const minorY = [19, 38, 58, 77, 96, 115, 134, 154, 173];
define('drawing-view', `
  :host{display:flex;flex-direction:column;min-width:0;background:#efefef;border-left:2px solid #111;margin-bottom:2px}
  .tabs{height:26px;padding:5px 0 0 3px;display:flex}
  .tab{height:21px;padding-right:2px;border-right:1px solid #111;margin-left:1px}
  .tab button{display:block;height:20px;width:54px;border:1px dotted #222;line-height:18px}
  .frame{flex:1;min-height:0;display:flex;margin:0 2px 4px 2px;padding:4px 5px 6px 6px;border-right:1px solid #111;border-bottom:1px solid #111;border-top:1px solid #fafafa}
  .frame>svg{flex:1;min-width:0;width:100%;height:100%;background:#fff;outline:1px solid #c4c4c4}
  .m{font:10px "Liberation Mono",monospace}
  .s{font:10px "Liberation Serif",serif}
  text{text-anchor:middle;fill:#111}`,
  () => `<div class="tabs"><div class="tab"><button type="button">Blatt .1</button></div></div>
  <div class="frame"><svg role="img" aria-label="Zeichenblatt">
    <defs><pattern id="g" x="-1" y="9" width="191" height="192" patternUnits="userSpaceOnUse">
      <g fill="none" stroke="#c6c6c6" stroke-width="1" shape-rendering="crispEdges">
        <path d="M.5 0v192M0 .5h191"/>
        <path stroke-dasharray="2 2" d="${minorX.map(x => `M${x}.5 1v191`).join('')}"/>
        <path stroke-dasharray="3 2" d="${minorY.map(y => `M1 ${y}.5h190`).join('')}"/>
      </g></pattern></defs>
    <g transform="translate(382 15)" shape-rendering="crispEdges" fill="none" stroke="#000">
        <path d="M0 0h401" stroke-width="2"/><path d="M.5 0v570"/>
        <path d="M403 4v570" stroke-width="4"/><path d="M4 572h401" stroke-width="4"/>
    </g>
    <path d="M0 0h4000v4000H0z" fill="url(#g)"/>
    <g transform="translate(382 15)">
      <g shape-rendering="crispEdges" fill="none" stroke="#000">
        <path d="M19 33h363v518H19z" stroke-width="2"/>
        <path d="M19 455.500h363M19 493.500h363M19 531.500h152.500M171.500 455v95M285.500 455v38M56.500 493v38M95.500 531v19"/>
      </g>
      <g class="m"><text x="226" y="478">Messing</text><text x="333" y="470">Datum:</text><text x="333" y="482">30.10.2004</text>
        <text x="38" y="508">M</text><text x="38" y="520">1:1</text><text x="108" y="515">160x50x10</text>
        <text x="58" y="544">Index: 01</text><text x="134" y="544">Z Nummer:01</text></g>
      <text class="s" x="91" y="477">Name des Ws</text>
      <g fill="none" stroke="#777"><path d="M289 506.600A59 18 0 0 1 294 541M259 506.600A59 18 0 0 0 254 541"/><path d="M289 507A55 18 0 0 1 294 541M259 507A55 18 0 0 0 254 541" stroke="#999"/></g>
      <path d="M265 510l-2-5 4 3 1-5 3 4 3-6 3 6 3-4 1 5 4-3-2 5z" fill="#555" stroke="#fff" stroke-width=".5"/>
      <text x="274" y="528" font-family="Liberation Serif" font-size="15">SCHAGERL</text>
      <text x="274" y="541" font-family="Liberation Serif" font-size="7" style="fill:#777">AUSTRIA</text>
    </g>
    <g transform="translate(382 585)" fill="none" stroke="#1760e6" stroke-width="2"><path d="M0 1v-56M-3-52l3-4 3 4M0 .5h56M53-3l4 3.500-4 3.500"/></g>
  </svg></div>`);

/* ---------- right toolbars ---------- */
define('rail-group', `
  :host{display:flex;flex-direction:column;min-height:0}
  span{width:16px;height:2px;margin:6px 0 9px;background:#fff;flex:none}`,
  `<span></span><slot></slot>`);

define('side-rail', `
  :host{display:grid;grid-template-columns:36px 28px;column-gap:4px;padding-left:6px;width:78px;
    background:linear-gradient(90deg,#f4f4fb,#cfcfe7 10px,#cfcfe7 68px,#a2a2bc)}
  .a,.b{display:grid;align-content:start;min-width:0}
  .a{padding-top:116px;grid-template-rows:171px 131px 115px auto}
  .b{grid-template-rows:50px 84px 113px 103px 101px 55px auto}
  hr{width:30px;height:2px;border:0;margin:0 0 2px;background:#fff;flex:none}
  tool-button[drop]{height:30px}`,
  `<div class="a">
    <rail-group><tool-button drop name="point"></tool-button><tool-button drop name="line"></tool-button><tool-button drop name="circle"></tool-button><tool-button drop name="profile"></tool-button><tool-button drop name="spline"></tool-button></rail-group>
    <rail-group><tool-button name="cons1"></tool-button><tool-button name="cons2"></tool-button><tool-button name="cons3"></tool-button><tool-button name="cons4"></tool-button></rail-group>
    <rail-group><tool-button drop name="fillet"></tool-button><tool-button drop name="mirror"></tool-button><tool-button drop name="box"></tool-button></rail-group>
    <rail-group><tool-button drop name="text"></tool-button><tool-button drop name="rough"></tool-button><tool-button drop name="gridt"></tool-button></rail-group>
  </div><div class="b">
    <rail-group><tool-button name="wb"></tool-button></rail-group>
    <rail-group><tool-button drop name="arrow"></tool-button><tool-button name="rotate"></tool-button></rail-group>
    <rail-group><tool-button drop name="sheet"></tool-button><tool-button name="view"></tool-button><tool-button name="circles"></tool-button></rail-group>
    <rail-group><tool-button drop name="target"></tool-button><tool-button name="bucket"></tool-button><tool-button name="arrows"></tool-button></rail-group>
    <rail-group><tool-button name="weld"></tool-button><tool-button name="tz"></tool-button><tool-button name="ts"></tool-button></rail-group>
    <rail-group><tool-button off name="balloon"></tool-button></rail-group>
    <rail-group><tool-button drop name="dim"></tool-button><tool-button drop name="dimgear"></tool-button><tool-button drop name="break"></tool-button><hr><tool-button drop name="datum"></tool-button></rail-group>
  </div>`);

/* ---------- lower toolbars and status ---------- */
define('bottom-toolbars', `
  :host{display:grid;grid-template-columns:182px 214px 189px 231px 75px 165px 1fr auto;height:38px;padding-top:2px;border-bottom:1px solid #4c4c58;--lead:7px;
    background:linear-gradient(#fff 0,#fff 2px,#cfcfe7 12px,#cfcfe7 23px,#9c9cb0 37px)}
  .logo{width:44px;height:34px;margin-right:5px;overflow:visible}`,
  `<tool-group><tool-button off name="refresh"></tool-button></tool-group>
  <tool-group><tool-button name="fx"></tool-button><tool-button name="bubble"></tool-button><tool-button narrow off name="chain"></tool-button><tool-button drop name="table"></tool-button><tool-button name="nodes"></tool-button><tool-button drop name="lock"></tool-button><tool-button name="brace"></tool-button></tool-group>
  <tool-group><tool-button name="fit"></tool-button><tool-button name="pan"></tool-button><tool-button name="zoomin"></tool-button><tool-button name="zoomout"></tool-button><tool-button name="viewa"></tool-button><tool-button name="viewb"></tool-button></tool-group>
  <tool-group><tool-button name="grid"></tool-button><tool-button name="snap"></tool-button><tool-sep></tool-sep><tool-button name="dimA"></tool-button><tool-button name="dimB"></tool-button><tool-button name="check"></tool-button><tool-button name="spark"></tool-button><tool-sep></tool-sep><tool-button name="dimC"></tool-button></tool-group>
  <tool-group><tool-button name="measure"></tool-button><tool-button name="caliper"></tool-button></tool-group>
  <tool-group><tool-button name="slab"></tool-button></tool-group>
  <tool-group><tool-button drop off name="v1"></tool-button><tool-button drop off name="v2"></tool-button><tool-button drop off name="v3"></tool-button><tool-button drop off name="v4"></tool-button><tool-button drop off name="v5"></tool-button><tool-sep></tool-sep><tool-button off name="v6"></tool-button></tool-group>
  <svg class="logo" viewBox="0 0 44 34"><path d="M14 1c7-1 9 1 6 4-1 1-2 2-4 3" fill="none" stroke="#d8243c" stroke-width="2.200"/><path d="M8 11c10-1 8 10-6 11l6-8" fill="none" stroke="#2c2a80" stroke-width="2.200"/><path d="M26 8c-4-1-8 0-8 3s5 3 4 6-5 4-8 2" fill="none" stroke="#f5a01c" stroke-width="2.400"/><text x="7" y="29" font-family="Liberation Sans" font-size="10" font-weight="700" font-style="italic" fill="#2c2a80">CATIA</text></svg>`);

define('status-bar', `
  :host{display:grid;grid-template-columns:1fr 299px 66px;gap:1px;align-items:center;height:24px;background:#cfcfe7;padding-left:3px}
  input{height:20px;width:100%;border:0;background:#fff;padding:0 4px;font:inherit}
  .b{display:flex;gap:1px}
  button{width:32px;height:21px;display:flex;align-items:center;justify-content:center;background:#c9c9d9;border-right:1px solid #222;border-bottom:1px solid #222}
  svg{display:block}`,
  `<span>Ein Objekt oder einen Befehl auswählen</span><input aria-label="Befehlseingabe"><span class="b"><button type="button" aria-label="Fenster"><svg width="14" height="14"><path d="M2 2h6v6H2zM10 11h3M12 3v8H3" ${W}/></svg></button><button type="button" aria-label="Alarm"><svg width="16" height="14"><path d="M2 12c0-12 12-12 12 0zM5 9l3-4 3 4z" ${W}/></svg></button></span>`);

/* ---------- desktop task bar ---------- */
define('task-item', `
  :host{display:flex;align-items:center;gap:4px;width:160px;height:20px}
  a{color:#04132c;text-decoration:none;white-space:nowrap}
  :host([active]) a{color:#c3d0e6}`,
  el => `<svg-icon name="${el.getAttribute('icon')}" size="15"></svg-icon><a href="#"><slot></slot></a>`);

define('task-bar', `
  :host{display:flex;height:50px;border-bottom:2px solid #0a2c66;
    background:linear-gradient(#e0432a 0 1px,#ffb3a0 1px 4px,#e0432a 4px 5px,#0a1c3c 5px 6px,transparent 6px),
      linear-gradient(90deg,#0d3a78,#14468a 10%,#2a68a6 30%,#3f80b8 45%,#4a8cc0 60%,#3574ae 75%,#164a8e 88%,#0d3679)}
  .start{width:70px;margin-top:6px;padding:3px 0 0 14px;border-right:1px dotted #061c44;background:#0b2f6633}
  .start button{display:block;line-height:0}
  .mid{flex:1;padding:7px 0 0 18px;min-width:0}
  .tasks,.quick{display:flex}
  .quick{gap:7px;padding-top:3px;margin-left:-9px}
  .tray{display:grid;grid-template-columns:repeat(3,18px) 1fr;grid-template-rows:20px 20px;align-items:center;align-content:start;width:131px;margin-top:6px;padding:1px 4px 0 6px;border-left:1px solid #6f9fd0;color:#fff}
  .tray svg-icon{justify-self:center}
  time,b{font-weight:400;text-align:center}`,
  `<div class="start"><button type="button" aria-label="Start"><svg-icon name="finder" size="21"></svg-icon></button></div>
  <div class="mid"><div class="tasks"><task-item active icon="catia">CATIA V5 - [Zeichnun...</task-item><task-item icon="page">OGame.de - Microsoft I...</task-item><task-item icon="page">Foren auf CAD.de - Er...</task-item><task-item icon="page">3D---&gt;2D (CATIA V5/C...</task-item><task-item icon="search">Suchergebnisse</task-item></div>
  <div class="quick">${['mail', 'ie', 'excel', 'clock', 'ppt', 'word', 'ff', 'qt', 'bolt', 'wmp'].map(n => `<svg-icon name="${n}" size="16"></svg-icon>`).join('')}</div></div>
  <div class="tray"><svg-icon name="t1"></svg-icon><svg-icon name="t2"></svg-icon><svg-icon name="t3"></svg-icon><time>08:51</time><svg-icon name="t4"></svg-icon><svg-icon name="t5"></svg-icon><svg-icon name="t6"></svg-icon><b>Mittwoch</b></div>`);

/* ---------- hand-drawn highlight lying over the lower right toolbar ---------- */
define('mark-rings', `
  :host{display:block;position:absolute;right:131px;bottom:47px;width:313px;height:91px;pointer-events:none}
  svg{display:block}`,
  `<svg width="313" height="91" fill="none" shape-rendering="crispEdges"><ellipse cx="156" cy="45" rx="155.500" ry="44.500" stroke="#d01830"/><ellipse cx="156" cy="45" rx="133.500" ry="39.500" stroke="#000"/></svg>`);

define('cad-app', `
  :host{display:flex;flex-direction:column;height:100vh;position:relative;overflow:hidden}
  .work{flex:1;min-height:0;display:grid;grid-template-columns:auto 8px 1fr 78px;background:#efefef}
  .split{background:#fff;margin:2px 3px 2px 3px}`,
  `<title-bar></title-bar><menu-bar></menu-bar><top-toolbars></top-toolbars>
  <main class="work"><spec-tree></spec-tree><div class="split"></div><drawing-view></drawing-view><side-rail></side-rail></main>
  <bottom-toolbars></bottom-toolbars><status-bar></status-bar><task-bar></task-bar><mark-rings></mark-rings>`);
</script>
</body>
</html>
